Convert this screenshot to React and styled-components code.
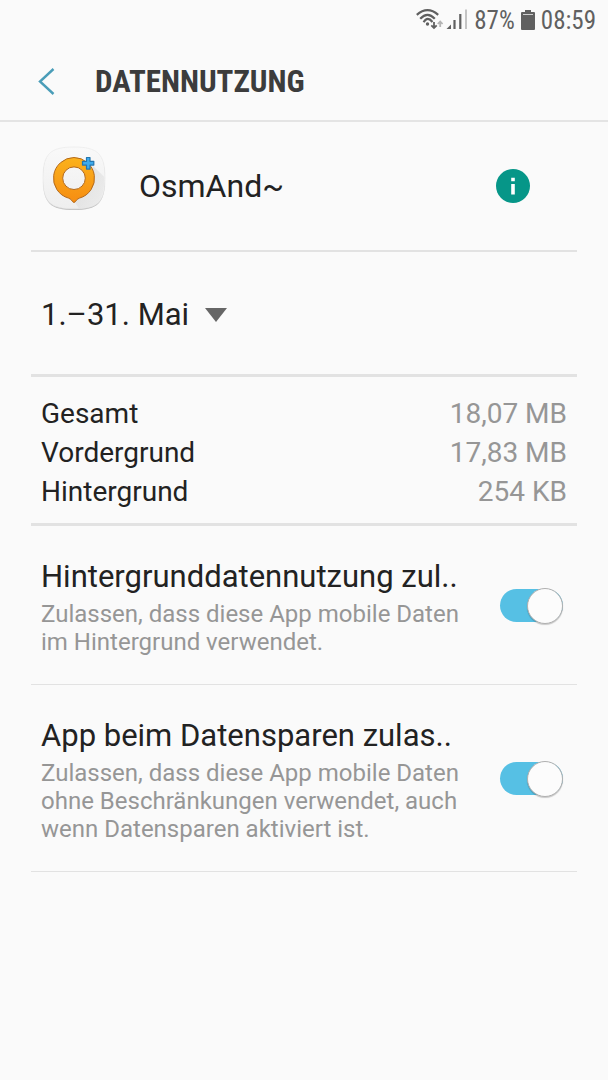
import React, { useState } from "react";
import styled, { createGlobalStyle } from "styled-components";

const GlobalStyle = createGlobalStyle`
  *,
  *::before {
    box-sizing: border-box;
  }
  body {
    margin: 0;
    background: #fafafa;
    color: #222222;
    font-family: Roboto, "Noto Sans", sans-serif;
  }
`;

// status bar
const StatusBar = styled.div`
  display: flex;
  align-items: center;
  justify-content: flex-end;
  gap: 6px;
  height: 40px;
  padding: 2px 12px 0;
  color: #606060;
  font-family: "Roboto Condensed", "Liberation Sans Narrow", Roboto, sans-serif;
  font-size: 25px;
  line-height: 38px;
`;

// header
const Header = styled.header`
  display: flex;
  align-items: center;
  gap: 40px;
  height: 82px;
  padding: 3px 38px 0;
  border-bottom: 2px solid #e4e4e4;
`;

const BackButton = styled.button`
  display: flex;
  padding: 0;
  border: 0;
  background: none;
`;

const Title = styled.h1`
  margin: 0;
  color: #3c3c3c;
  font-family: "Roboto Condensed", "Liberation Sans Narrow", Roboto, sans-serif;
  font-size: 31px;
  font-weight: 700;
  line-height: 40px;
`;

// content
const Content = styled.main`
  padding: 0 31px;
`;

const Section = styled.section`
  padding: 0 10px;
  border-bottom: ${(props) => props.$line || 1}px solid #e2e2e2;
`;

const AppRow = styled(Section)`
  display: flex;
  align-items: center;
  height: 130px;
`;

const AppIcon = styled.div`
  display: flex;
  padding-bottom: 14px;
`;

const AppName = styled.div`
  flex: 1;
  margin-left: 32px;
  font-size: 32px;
  line-height: 40px;
`;

const InfoButton = styled.button`
  display: flex;
  margin-right: 37px;
  padding: 0;
  border: 0;
  background: none;
`;

const MonthRow = styled(Section)`
  display: flex;
  align-items: center;
  height: 125px;
  padding-top: 4px;
`;

const MonthLabel = styled.label`
  display: flex;
  align-items: center;
  gap: 16px;
`;

const MonthSelect = styled.select`
  appearance: none;
  field-sizing: content;
  margin: 0;
  padding: 0;
  border: 0;
  background: none;
  color: inherit;
  font-family: inherit;
  font-size: 31px;
  line-height: 40px;
`;

const UsageSection = styled(Section)`
  padding: 17px 10px 12px;
`;

const UsageTable = styled.table`
  width: 100%;
  border-collapse: collapse;
  font-size: 28px;
  line-height: 39px;

  th,
  td {
    padding: 0;
    font-weight: 400;
  }
  th {
    text-align: left;
  }
  td {
    color: #969696;
    text-align: right;
  }
`;

const Preference = styled(Section)`
  display: flex;
  align-items: center;
  justify-content: space-between;
  padding: 29px 14px 28px 10px;
`;

const PreferenceText = styled.label`
  flex: 1;
  max-width: 432px;
  padding-top: 4px;
`;

const PreferenceTitle = styled.div`
  margin-bottom: 5px;
  font-size: 31px;
  line-height: 36px;
  white-space: nowrap;
`;

const Summary = styled.div`
  color: #969696;
  font-size: 24px;
  line-height: 28px;
`;

const Switch = styled.input`
  appearance: none;
  display: flex;
  align-items: center;
  flex: none;
  width: 63px;
  height: 33px;
  margin: 0;
  border-radius: 17px;
  background: ${(props) => (props.checked ? "#56c0e4" : "#c4c4c4")};

  &::before {
    content: "";
    width: 36px;
    height: 36px;
    margin-left: ${(props) => (props.checked ? "27px" : "0")};
    flex: none;
    border: 1px solid #b0b0b0;
    border-radius: 50%;
    background: #fcfcfc;
    box-shadow: 0 1px 1px rgba(0, 0, 0, 0.2);
  }
`;

const usage = [
  { label: "Gesamt", value: "18,07 MB" },
  { label: "Vordergrund", value: "17,83 MB" },
  { label: "Hintergrund", value: "254 KB" },
];

const preferences = [
  {
    id: "background",
    title: "Hintergrunddatennutzung zul..",
    summary: "Zulassen, dass diese App mobile Daten im Hintergrund verwendet.",
  },
  {
    id: "saver",
    title: "App beim Datensparen zulas..",
    summary:
      "Zulassen, dass diese App mobile Daten ohne Beschränkungen verwendet, auch wenn Datensparen aktiviert ist.",
  },
];

function SignalIcons() {
  return (
    <svg width="52" height="24" viewBox="0 0 52 24" fill="none">
      <g stroke="#606060" strokeWidth="2.2">
        <path d="M0.8 5.8Q11.5 -3.5 22.2 5.8" />
        <path d="M4.2 9.8Q11.5 1.8 18.8 9.8" />
        <path d="M7.6 13.2Q11.5 6.8 16.5 13" />
        <path d="M18 13V19M15.3 16.3L18 19L20.7 16.3" strokeWidth="1.8" />
      </g>
      <circle cx="11.5" cy="15" r="1.7" fill="#606060" />
      <path d="M24.2 18V12.5M21.8 15L24.2 12.5L26.6 15" stroke="#b4b4b4" strokeWidth="1.8" />
      <path d="M30.5 20L35 15.5V20Z" fill="#606060" />
      <path d="M37.4 11H39.6V20H37.4ZM43.2 5H45.4V20H43.2Z" fill="#606060" />
      <path d="M49 0.500H51V20H49Z" fill="#c4c4c4" />
    </svg>
  );
}

function BatteryIcon() {
  return (
    <svg width="14" height="24" viewBox="0 0 14 24">
      <path
        d="M4 1H10V3H13Q14 3 14 4V20Q14 21 13 21H1Q0 21 0 20V4Q0 3 1 3H4Z"
        fill="#606060"
      />
      <path d="M2 5.5H12" stroke="#d0d0d0" strokeWidth="1" />
    </svg>
  );
}

function OsmAndIcon() {
  return (
    <svg width="66" height="66" viewBox="0 0 66 66">
      <defs>
        <linearGradient id="plate" x1="0" y1="0" x2="0" y2="1">
          <stop offset="0" stopColor="#f9f9f9" />
          <stop offset="1" stopColor="#eeeeee" />
        </linearGradient>
        <linearGradient id="pin" x1="0" y1="0" x2="0" y2="1">
          <stop offset="0" stopColor="#fbb21c" />
          <stop offset="1" stopColor="#f68d12" />
        </linearGradient>
        <linearGradient id="shade" x1="0" y1="0" x2="1" y2="1">
          <stop offset="0" stopColor="#cfcfcf" />
          <stop offset="1" stopColor="#ececec" />
        </linearGradient>
      </defs>
      <path
        d="M33 2C57 2 64 9 64 33S57 64 33 64S2 57 2 33S9 2 33 2Z"
        fill="#c0c0c0"
      />
      <path
        d="M33 1C57 1 64 8 64 32S57 62.8 33 62.8S2 56 2 32S9 1 33 1Z"
        fill="url(#plate)"
        stroke="#e8e8e8"
        strokeWidth="0.6"
      />
      <path
        d="M52 20L63.4 31C63 55 57 61.8 38 62.4L33 55Z"
        fill="url(#shade)"
        opacity="0.6"
      />
      <path
        d="M33 11.5A20.7 20.7 0 0 1 38.5 52.1Q36 52.8 34.2 55.8Q33 57.2 31.8 55.8Q30 52.8 27.5 52.1A20.7 20.7 0 0 1 33 11.5ZM33 20.9A11.3 11.3 0 1 0 33 43.5A11.3 11.3 0 1 0 33 20.9Z"
        fill="url(#pin)"
        stroke="#b4691b"
        strokeWidth="1"
        fillRule="evenodd"
      />
      <path
        d="M45.5 11.5H49V15.3H52.8V19.1H49V23.1H45.5V19.1H41.5V15.3H45.5Z"
        fill="#3dabed"
        stroke="#2476ae"
        strokeWidth="1.2"
        strokeLinejoin="round"
      />
    </svg>
  );
}

function App() {
  const [enabled, setEnabled] = useState({ background: true, saver: true });

  const toggle = (id) => setEnabled({ ...enabled, [id]: !enabled[id] });

  return (
    <>
      <GlobalStyle />
      <StatusBar>
        <SignalIcons />
        <span>87%</span>
        <BatteryIcon />
        <span>08:59</span>
      </StatusBar>
      <Header>
        <BackButton aria-label="Zurück">
          <svg width="17" height="28" viewBox="0 0 17 28" fill="none">
            <path d="M15.5 1L2 13.5L15.5 26" stroke="#4a9db8" strokeWidth="2.4" />
          </svg>
        </BackButton>
        <Title>DATENNUTZUNG</Title>
      </Header>
      <Content>
        <AppRow $line={2}>
          <AppIcon>
            <OsmAndIcon />
          </AppIcon>
          <AppName>OsmAnd~</AppName>
          <InfoButton aria-label="Info">
            <svg width="34" height="34" viewBox="0 0 34 34">
              <circle cx="17" cy="17" r="17" fill="#069688" />
              <path d="M15.2 8.8H18.8V12.2H15.2ZM15.2 15H18.8V25.5H15.2Z" fill="#fff" />
            </svg>
          </InfoButton>
        </AppRow>
        <MonthRow $line={3}>
          <MonthLabel>
            <MonthSelect aria-label="Zeitraum">
              <option>1.–31. Mai</option>
            </MonthSelect>
            <svg width="22" height="14" viewBox="0 0 22 14">
              <path d="M0 0H22L11 14Z" fill="#666666" />
            </svg>
          </MonthLabel>
        </MonthRow>
        <UsageSection $line={3}>
          <UsageTable>
            <tbody>
              {usage.map((row) => (
                <tr key={row.label}>
                  <th scope="row">{row.label}</th>
                  <td>{row.value}</td>
                </tr>
              ))}
            </tbody>
          </UsageTable>
        </UsageSection>
        {preferences.map((item) => (
          <Preference key={item.id}>
            <PreferenceText htmlFor={item.id}>
              <PreferenceTitle>{item.title}</PreferenceTitle>
              <Summary>{item.summary}</Summary>
            </PreferenceText>
            <Switch
              type="checkbox"
              role="switch"
              id={item.id}
              checked={enabled[item.id]}
              onChange={() => toggle(item.id)}
            />
          </Preference>
        ))}
      </Content>
    </>
  );
}

export default App;
